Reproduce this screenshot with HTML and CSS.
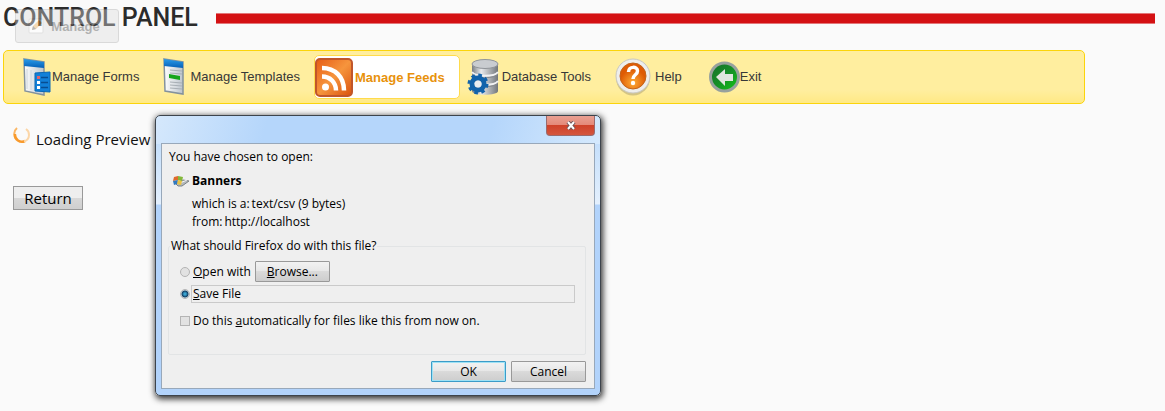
FILE: index.html
```
<!DOCTYPE html>
<html lang="en">
<head>
<meta charset="utf-8">
<title>Control Panel</title>
<link rel="stylesheet" href="styles.css">
</head>
<body>
<header class="header">
  <h1 class="title">CONTROL PANEL</h1>
  <div class="rule"></div>
  <button class="ghost" type="button">
    <svg width="16" height="16" viewBox="0 0 16 16"><rect x="1" y="1" width="14" height="14" rx="1" fill="#fff" stroke="#bbb"/><path d="M4 12l1-4 6-6 3 3-6 6z" fill="#e8a850"/><path d="M4 12l1-4 3 3z" fill="#555"/></svg>
    <span>Manage</span>
  </button>
</header>

<nav class="nav">
  <a class="item" href="#">
    <svg width="29" height="38" viewBox="0 0 29 38">
      <defs><linearGradient id="blue" x2="0" y2="1"><stop stop-color="#2a9be8"/><stop offset="1" stop-color="#0560b8"/></linearGradient>
      <linearGradient id="paper"><stop stop-color="#fff"/><stop offset="1" stop-color="#bcc4cc"/></linearGradient></defs>
      <path d="M1 1l20 3v33L2 33z" fill="url(#paper)" stroke="#84929d" stroke-width="1.5"/>
      <path d="M1 1l20 3v6L1 8z" fill="url(#blue)"/>
      <path d="M4 11v20M8 12v20" stroke="#ccd4da"/>
      <path d="M12 15l15-1v20l-15-1z" fill="#1280d8" stroke="#0a68b5"/>
      <path d="M18 19.500h7M18 24.500h7M18 29.500h7" stroke="#084d91" stroke-width="1.500"/>
      <path d="M14 24.500h3M14 29.500h3" stroke="#fff" stroke-width="3"/><path d="M14 19.500h3" stroke="#e0646c" stroke-width="3"/>
    </svg>
    <span>Manage Forms</span>
  </a>
  <a class="item item-templates" href="#">
    <svg width="22" height="38" viewBox="0 0 22 38">
      <path d="M1 1l19 3v32L2 33z" fill="url(#paper)" stroke="#84929d" stroke-width="1.5"/>
      <path d="M1 1l19 3v6L1 8z" fill="url(#blue)"/>
      <path d="M7 12l12 1M7 15l12 1M7 24l12 1M7 27l12 1M7 30l12 1" stroke="#a8afb5"/>
      <path d="M6 16l11 2v4L6 20z" fill="#16a51b"/>
    </svg>
    <span>Manage Templates</span>
  </a>
  <a class="item item-active" href="#">
    <svg width="38" height="39" viewBox="0 0 38 39">
      <defs><linearGradient id="orange" x2="1" y2="1"><stop stop-color="#e65c16"/><stop offset=".5" stop-color="#f6953d"/><stop offset="1" stop-color="#d9510e"/></linearGradient></defs>
      <rect x="1" y="1" width="36" height="37" rx="4" fill="url(#orange)" stroke="#c0562a" stroke-width="2"/>
      <circle cx="10.500" cy="29" r="3.500" fill="#fff"/>
      <path d="M7 18.500c8 0 14 6 14 14M7 10c13 0 22 9 22 22.500" fill="none" stroke="#fff" stroke-width="4.500"/>
    </svg>
    <span>Manage Feeds</span>
  </a>
  <a class="item item-database" href="#">
    <svg width="32" height="38" viewBox="0 0 32 38">
      <defs><linearGradient id="metal"><stop stop-color="#777c82"/><stop offset=".35" stop-color="#e8eaec"/><stop offset="1" stop-color="#72777c"/></linearGradient></defs>
      <path d="M5 6v27c0 5 26 5 26 0V6z" fill="url(#metal)"/>
      <ellipse cx="18" cy="6" rx="13" ry="4.500" fill="#c9ccd0" stroke="#909499"/>
      <path d="M5 14c3 5 23 5 26 0M5 23c3 5 23 5 26 0" fill="none" stroke="#f1f2f3" stroke-width="2"/>
      <path d="M5 16c3 5 23 5 26 0M5 25c3 5 23 5 26 0" fill="none" stroke="#85898e"/>
      <circle cx="11" cy="26" r="6" fill="none" stroke="#1263ab" stroke-width="5"/>
      <circle cx="11" cy="26" r="9" fill="none" stroke="#1263ab" stroke-width="3" stroke-dasharray="3.600 3.470"/>
      <circle cx="11" cy="26" r="3.500" fill="#e9edf1"/>
    </svg>
    <span>Database Tools</span>
  </a>
  <a class="item item-help" href="#">
    <svg width="36" height="38" viewBox="0 0 36 38">
      <defs><radialGradient id="amber" cy=".75"><stop stop-color="#ffac35"/><stop offset="1" stop-color="#de5b05"/></radialGradient></defs>
      <ellipse cx="18" cy="20" rx="17" ry="17.500" fill="#a79b72" opacity=".5"/>
      <circle cx="18" cy="18" r="17" fill="#eeeeec" stroke="#c9c8c2"/>
      <circle cx="18" cy="18" r="13" fill="url(#amber)" stroke="#c2631b"/>
      <path d="M13.500 14c0-6 9-6 9-1 0 4-4.500 3.500-4.500 8" fill="none" stroke="#fff" stroke-width="3.500"/>
      <circle cx="18" cy="25" r="2.200" fill="#fff"/>
    </svg>
    <span>Help</span>
  </a>
  <a class="item item-exit" href="#">
    <svg width="31" height="32" viewBox="0 0 31 32">
      <defs><linearGradient id="green" x2="1" y2="1"><stop stop-color="#176d2c"/><stop offset=".5" stop-color="#158f27"/><stop offset="1" stop-color="#13c914"/></linearGradient></defs>
      <circle cx="15.500" cy="16" r="14" fill="url(#green)" stroke="#98a19d" stroke-width="3"/>
      <path d="M7 16l9-8v5h8v7h-8v5z" fill="#dfe6df"/>
    </svg>
    <span>Exit</span>
  </a>
</nav>

<main class="content">
  <p class="loading">
    <svg width="18" height="18" viewBox="0 0 18 18">
      <path d="M4 2a8 8 0 0 0-1 11" fill="none" stroke="#fbb765" stroke-width="2"/>
      <path d="M2 8a7 7 0 0 0 10 7" fill="none" stroke="#f89a2c" stroke-width="2.500"/>
      <path d="M11 15.500a7 7 0 0 0 5-6.500q0-4-3-6" fill="none" stroke="#fcd6a7" stroke-width="2"/>
    </svg>
    <span>Loading Preview</span>
  </p>
  <button class="return" type="button">Return</button>
</main>

<section class="dialog" role="dialog" aria-label="Opening Banners">
  <div class="titlebar">
    <button class="close" type="button" aria-label="Close">
      <svg width="10" height="9" viewBox="0 0 10 9"><path d="M2 1l6 7M8 1L2 8" stroke="#6c5358" stroke-width="4"/><path d="M2 1l6 7M8 1L2 8" stroke="#fff" stroke-width="2"/></svg>
    </button>
  </div>
  <form class="client">
    <p class="intro">You have chosen to open:</p>
    <p class="file">
      <svg width="16" height="12" viewBox="0 0 16 12"><path d="M2 8l8-3 6 1-7 5H5z" fill="#b4b9bc" stroke="#7d8386"/><path d="M7 8l7-3" stroke="#f3f4f4"/><path d="M1 2l4-1v4L0 6z" fill="#df6a2c"/><path d="M5 1l5 1-1 4-4-1z" fill="#83b83a"/><path d="M0 6l5-1-1 4-3 1z" fill="#327ac0"/><path d="M5 5l4 1-1 4-4-1z" fill="#eac344"/></svg>
      <strong>Banners</strong>
    </p>
    <dl class="details">
      <div><dt>which is a:</dt><dd>text/csv (9 bytes)</dd></div>
      <div><dt>from:</dt><dd>http://localhost</dd></div>
    </dl>
    <fieldset class="choices">
      <legend>What should Firefox do with this file?</legend>
      <div class="open-row">
        <input class="radio" type="radio" name="action" id="open">
        <label for="open"><u>O</u>pen with</label>
        <button class="button" type="button"><span><u>B</u>rowse...</span></button>
      </div>
      <div class="save-row">
        <input class="radio" type="radio" name="action" id="save" checked>
        <label class="focused" for="save"><u>S</u>ave File</label>
      </div>
      <div class="auto-row">
        <input class="check" type="checkbox" id="auto">
        <label for="auto">Do this <u>a</u>utomatically for files like this from now on.</label>
      </div>
    </fieldset>
    <div class="actions">
      <button class="button primary" type="button">OK</button>
      <button class="button" type="button">Cancel</button>
    </div>
  </form>
</section>
</body>
</html>
```
FILE: styles.css
```
* { box-sizing: border-box; }
body {
  margin: 0;
  background: #fafafa;
  color: #111;
  font-family: "Open Sans", "Noto Sans", sans-serif;
}
p, dl, dd, h1 { margin: 0; }
button { font-family: inherit; color: #000; padding: 0; }

.header {
  position: relative;
  display: flex;
  align-items: center;
  gap: 18px;
  height: 36px;
  margin: 0 10px 14px 3px;
}
.title {
  font: 500 25px/36px Roboto, sans-serif;
  color: #2b2b2b;
}
.rule {
  flex: 1;
  height: 11px;
  background: #d41113;
  border: solid #e37678;
  border-width: 1px 0;
}
.ghost {
  position: absolute;
  left: 12px;
  top: 9px;
  width: 104px;
  height: 34px;
  display: flex;
  align-items: center;
  justify-content: center;
  gap: 7px;
  padding-right: 6px;
  border: 1px solid #aaa;
  border-radius: 3px;
  background: #ddd;
  color: #444;
  font: bold 13px "Liberation Sans", sans-serif;
  opacity: .4;
}

.nav {
  display: flex;
  align-items: center;
  height: 54px;
  margin: 0 80px 0 3px;
  padding-left: 19px;
  border: 1px solid #fbd40b;
  border-radius: 5px;
  background: linear-gradient(#ffee9f 75%, #ffe985);
}
.item {
  display: flex;
  align-items: center;
  height: 44px;
  color: #383838;
  font: 13px "Liberation Sans", Arial, sans-serif;
  text-decoration: none;
  white-space: nowrap;
}
.item span { padding-bottom: 2px; }
.item-templates { margin-left: 24px; gap: 5px; }
.item-active {
  margin-left: 14px;
  padding-right: 14px;
  gap: 2px;
  border: 1px solid #ffdb4c;
  border-radius: 5px;
  background: #fff;
  color: #e8920c;
  font-weight: bold;
}
.item-active span { padding-bottom: 0; }
.item-database { margin-left: 7px; gap: 3px; }
.item-help { margin-left: 24px; gap: 4px; }
.item-exit { margin-left: 27px; }

.content { padding: 22px 13px; }
.loading {
  display: flex;
  gap: 5px;
  font: 15px/26px "Open Sans", sans-serif;
}
.return {
  width: 70px;
  height: 24px;
  margin-top: 34px;
  border: 1px solid #999;
  background: linear-gradient(#eee 48%, #d8d8d8 50%, #cfcfcf);
  font-size: 15px;
  line-height: 22px;
}

.dialog {
  position: absolute;
  left: 155px;
  top: 115px;
  width: 446px;
  padding: 0 5px 6px;
  border: 1px solid #3d444c;
  border-radius: 5px;
  background: linear-gradient(105deg, #d5e8fc, #b5d6fb 25%, #b5d6fb 75%, #d5e9fd) top / 100% 28px no-repeat,
    linear-gradient(#c5dffb 28px, #e4f0fd 88px, #b2d3fb 89px);
  box-shadow: 1px 2px 6px 1px #333;
  font-size: 12px;
  line-height: 18px;
  color: #000;
}
.titlebar {
  display: flex;
  justify-content: flex-end;
  height: 27px;
}
.close {
  display: flex;
  align-items: center;
  justify-content: center;
  width: 49px;
  height: 20px;
  border: 1px solid #9a6a6c;
  border-top: 0;
  border-radius: 0 0 4px 4px;
  background: linear-gradient(#e9a092, #e48878 48%, #cf4129 50%, #d4563e);
}
.client {
  padding: 4px 8px 6px 7px;
  border: 1px solid #98a8ba;
  background: #efefef;
}
.file {
  display: flex;
  align-items: center;
  gap: 3px;
  margin: 6px 0 5px 4px;
}
.details { padding-left: 23px; }
.details div { display: flex; gap: 2px; }
.choices {
  margin: 6px 0 6px -1px;
  padding: 6px 10px 24px 11px;
  border: 1px solid #e2e4e5;
  border-radius: 2px;
}
.choices legend { margin-left: -10px; padding: 0 1px; }
.open-row, .save-row, .auto-row {
  display: flex;
  align-items: center;
  gap: 3px;
}
.open-row .button { margin-left: 1px; }
.save-row { gap: 1px; margin: 3px 0 9px; }
.focused {
  flex: 1;
  border: 1px solid #cacaca;
  line-height: 16px;
  padding-left: 1px;
}
.radio, .check {
  appearance: none;
  flex: none;
  width: 10px;
  height: 10px;
  margin: 0;
  border: 1px solid #b4b4b4;
  background: #e2e2e2;
}
.radio { border-radius: 50%; }
.radio:checked {
  background: radial-gradient(circle, #3aa3d0 1px, #123e63 3px, #d8e3ea 4px);
}
.button {
  width: 75px;
  height: 21px;
  border: 1px solid #999;
  border-radius: 1px;
  background: linear-gradient(#f2f2f2, #e7e7e7 48%, #dadada 50%, #cdcdcd);
  font-size: 12px;
  line-height: 18px;
}
.actions {
  display: flex;
  justify-content: flex-end;
  gap: 5px;
}
.primary {
  border-color: #3c9cc8;
  box-shadow: inset 0 0 0 1px #9ee2f5;
}
```
